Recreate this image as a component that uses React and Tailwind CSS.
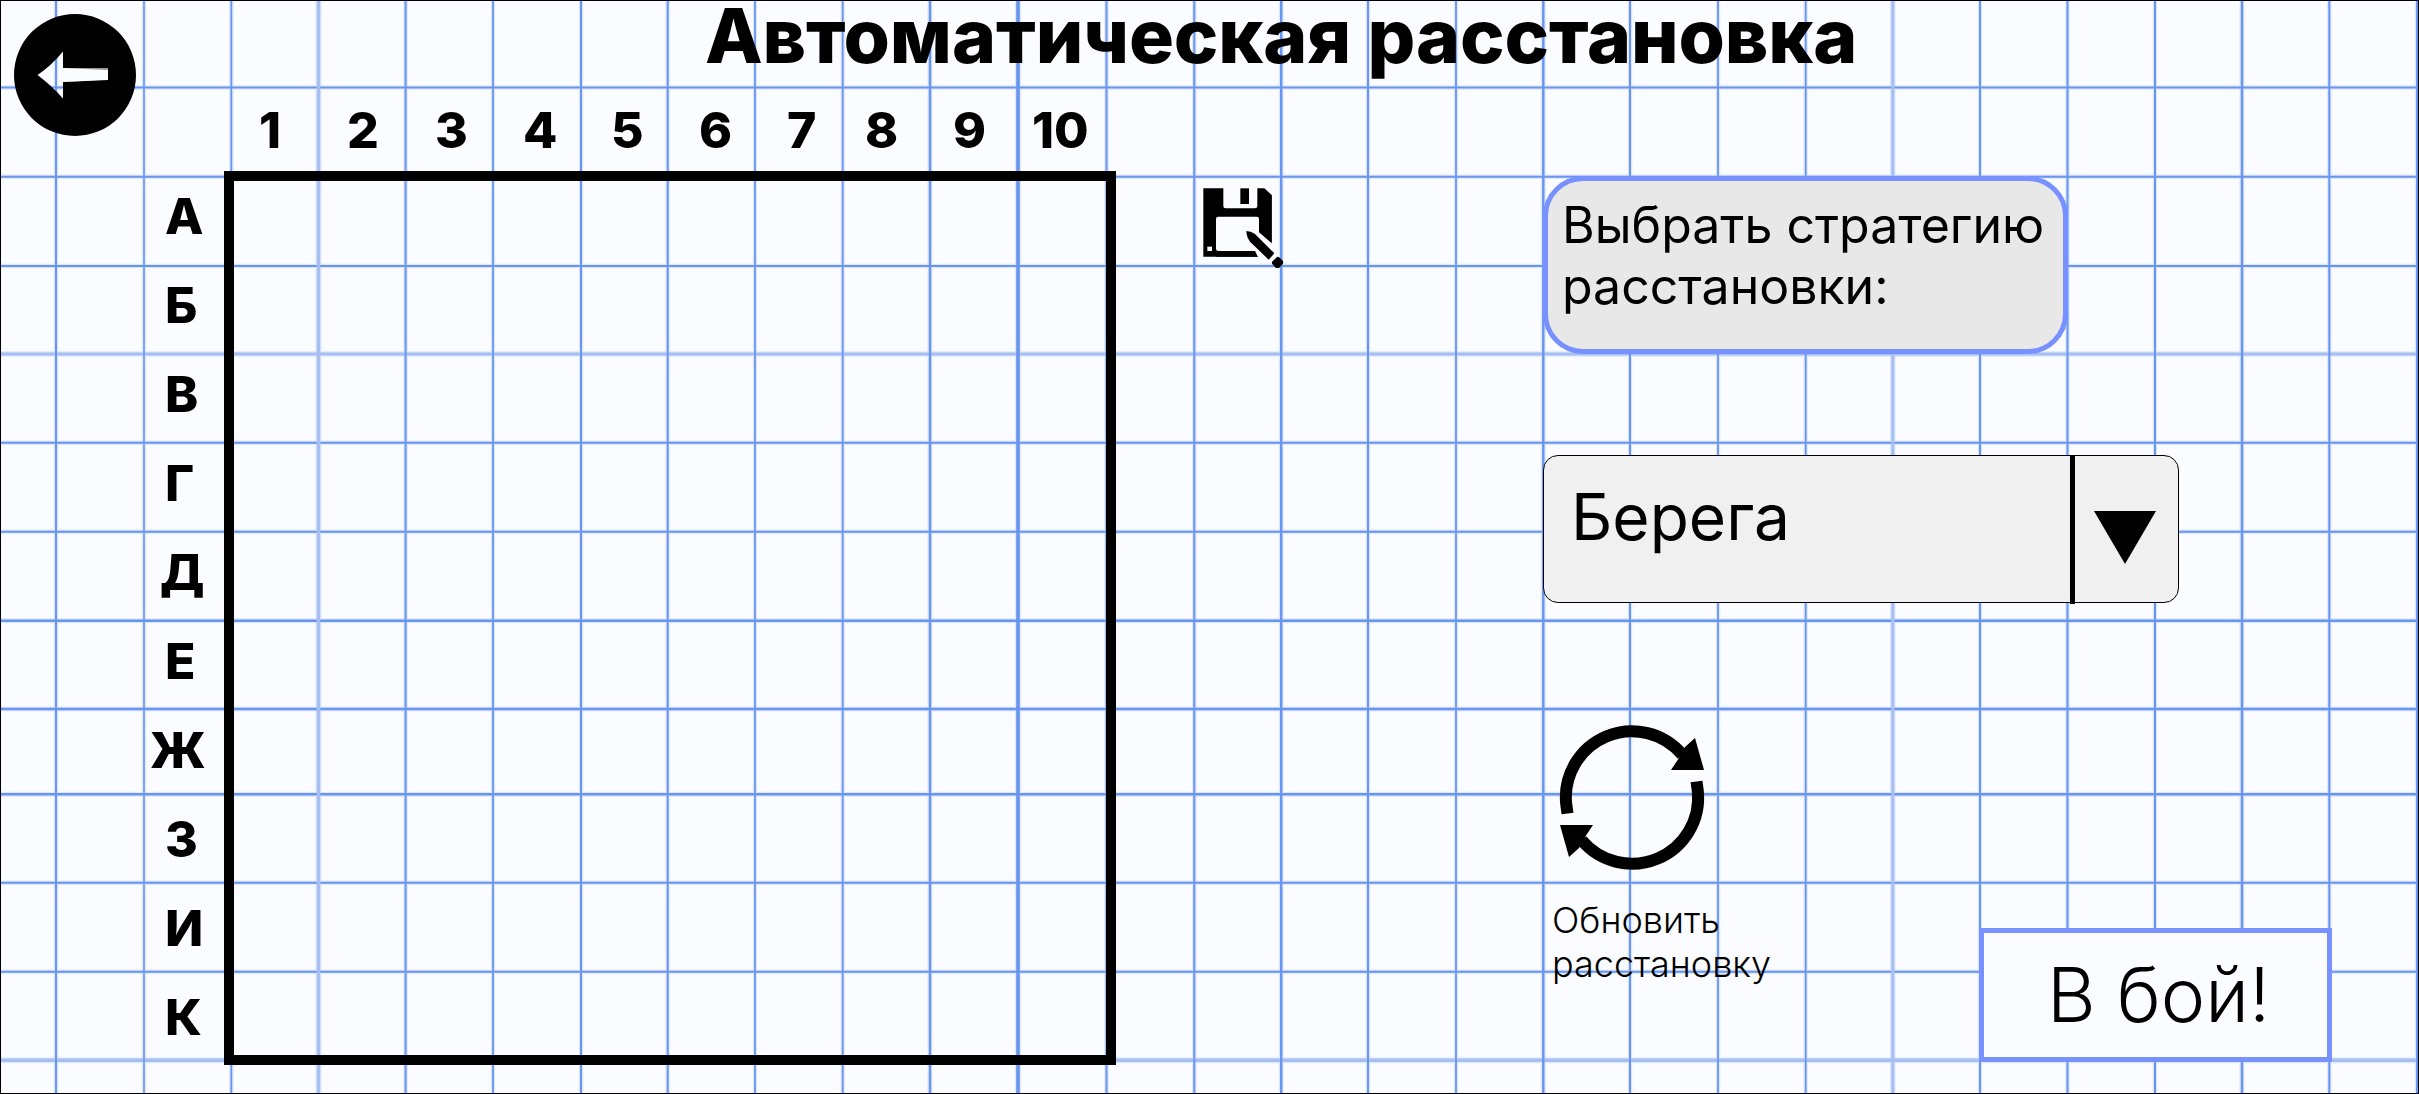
const columns = [
  ["1", "pl-[27px]"], ["2", "pl-[27px]"], ["3", "pl-[27px]"], ["4", "pl-[27px]"], ["5", "pl-[27px]"],
  ["6", "pl-[27px]"], ["7", "pl-[27px]"], ["8", "pl-[17px]"], ["9", "pl-[17px]"], ["10", "pl-[8px]"],
];
const rows = [
  ["А", "pl-[165px]"], ["Б", "pl-[165px]"], ["В", "pl-[165px]"], ["Г", "pl-[165px]"], ["Д", "pl-[160px]"],
  ["Е", "pl-[165px]"], ["Ж", "pl-[150px]"], ["З", "pl-[165px]"], ["И", "pl-[165px]"], ["К", "pl-[165px]"],
];

// [centre, width, faded] of the ruled vertical lines
const vLines = [
  [56, 2], [144, 1.6], [231.3, 1.8], [318.5, 3.4, true], [405.6, 2], [493, 1.8], [581, 2],
  [667.7, 2], [755, 1.8], [842.7, 1.8], [930, 2.4], [1018, 3.6], [1106.5, 2],
  [1194.3, 2], [1281.2, 2.4], [1368, 2], [1456, 1.8], [1543.3, 2.4], [1630, 2], [1718, 1.8],
  [1805.7, 1.8], [1892.8, 3, true], [1980, 2], [2067.5, 2], [2155, 2], [2242, 2.4], [2329.3, 2], [2417, 2],
];
const hLines = [
  [87.5, 2], [176.8, 2], [266, 2], [354, 3, true], [442.7, 2], [531.7, 2],
  [620.8, 2.4], [709, 2.4], [794.3, 2.4], [882.8, 2], [971.8, 2], [1060.3, 3.4, true],
];

function Paper() {
  const lines = [
    ...hLines.map(([y, w, soft]) => ({ d: `M0 ${y}H2419`, w, soft })),
    ...vLines.map(([x, w, soft]) => ({ d: `M${x} 0V1094`, w, soft })),
  ];
  return (
    <svg className="absolute inset-0 -z-10 h-full w-full" viewBox="0 0 2419 1094">
      <rect width="2419" height="1094" fill="#fbfcff" />
      {lines.map((l) => <path key={l.d} d={l.d} stroke="#dce8fc" strokeWidth={l.w + 2.6} />)}
      {lines.map((l) => <path key={l.d} d={l.d} stroke={l.soft ? "#a6bef1" : "#6a95ee"} strokeWidth={l.w} />)}
    </svg>
  );
}

function BackIcon() {
  return (
    <svg className="size-[122px]" viewBox="14 14 122 122">
      <path fillRule="evenodd" d="M75 14a61 61 0 1 1 0 122a61 61 0 1 1 0-122ZM37.5 75Q51 66 63 51.5V68L108 70V80L63 82V98.5Q51 85 37.5 75Z" />
      <path d="M64 68H108V79.500L64 82Z" fill="#fbfcff" fillOpacity="0.6" />
    </svg>
  );
}

function SaveIcon() {
  return (
    <svg className="h-[80px] w-[81px]" viewBox="309 84 243 240">
      <path d="M310 85H370V138Q370 145 377 145H465Q472 145 472 138V85H493L515 105V290H310Z" />
      <path d="M421 85H447V132H421Z" />
      <rect x="348" y="170" width="129" height="103" rx="7" fill="#fbfcff" />
      <rect x="322" y="260" width="14" height="13" fill="#fbfcff" />
      <path d="M434 206L472 212L517 249V292H474Z" fill="#fbfcff" />
      <path d="M477 170V216L515 250V105H477Z" />
      <path d="M348 273H460L474 290H348Z" />
      <path d="M439 213Q452 213 465 222L523 280L506 299L450 245Q440 232 439 213Z" />
      <path d="M532 290Q538 290 549 303V311L537 324H528L516 311V305Z" />
    </svg>
  );
}

function RefreshHalf() {
  return (
    <>
      <path d="M1567.500 813.500L1566.200 804A66 66 0 0 1 1682.500 755" fill="none" stroke="black" strokeWidth="12" />
      <path d="M1695 738L1704 770H1671L1679 758L1685 747Z" />
    </>
  );
}

function RefreshIcon() {
  return (
    <svg className="h-[145px] w-[144px] overflow-visible" viewBox="1560 725 144 145">
      <RefreshHalf />
      <g transform="rotate(180 1632 797.5)"><RefreshHalf /></g>
    </svg>
  );
}

export default function App() {
  return (
    <div className="relative isolate h-[1094px] w-[2419px] font-['Inter',sans-serif] text-black">
      <Paper />
      <header className="flex h-[86px] items-start">
        <button className="mt-[14px] ml-[14px] w-[122px] shrink-0"><BackIcon /></button>
        <h1 className="ml-[569px] text-[75px] leading-[71px] font-extrabold tracking-[-0.12px] whitespace-nowrap">Автоматическая расстановка</h1>
      </header>
      <main className="flex h-[1008px] items-start">
        <section className="w-[1116px] shrink-0">
          <div className="ml-[232px] grid h-[85px] grid-cols-[repeat(10,88px)] text-[50px] leading-[88px] font-extrabold">
            {columns.map(([label, pad]) => <span key={label} className={`${pad} whitespace-nowrap`}>{label}</span>)}
          </div>
          <div className="flex">
            <div className="w-[224px] shrink-0 pt-[1px] text-[50px] leading-[89px] font-extrabold">
              {rows.map(([label, pad]) => <div key={label} className={`${pad} h-[89px]`}>{label}</div>)}
            </div>
            <div className="h-[894px] w-[892px] shrink-0 border-[10px] border-black" />
          </div>
        </section>
        <button className="mt-[102px] ml-[87px] w-[81px] shrink-0"><SaveIcon /></button>
        <section className="ml-[259px] flex w-[876px] flex-col items-start">
          <div className="mt-[90px] h-[178px] w-[525px] rounded-[40px] border-[5px] border-[#7891ff] bg-[#e8e8e8] pt-[14px] pl-[14px] text-[50px] leading-[61px] whitespace-nowrap">
            Выбрать стратегию<br />расстановки:
          </div>
          <div className="mt-[101px] flex h-[148px] w-[636px] rounded-[15px] border border-black bg-[#f0f0f0]">
            <span className="w-[526px] shrink-0 pl-[27px] text-[64px] leading-[121px]">Берега</span>
            <span className="flex h-[148px] flex-1 justify-center border-l-[5px] border-black pt-[55px] pr-[4px]">
              <svg className="h-[53px] w-[62px]" viewBox="0 0 62 53"><path d="M0 0H62L31 53Z" /></svg>
            </span>
          </div>
          <div className="flex w-full items-start">
            <button className="mt-[122px] ml-[9px] w-[230px] shrink-0 text-left">
              <span className="ml-[8px] block"><RefreshIcon /></span>
              <span className="mt-[28px] block text-[36px] leading-[44px] font-light whitespace-nowrap">Обновить<br />расстановку</span>
            </button>
            <button className="mt-[325px] ml-[197px] h-[134px] w-[353px] shrink-0 border-[5px] border-[#7891ff] bg-[#fbfcff] pl-[6px] text-[75px] leading-[124px] font-light whitespace-nowrap">В бой!</button>
          </div>
        </section>
      </main>
      <div className="pointer-events-none absolute inset-0 border border-black" />
    </div>
  );
}
